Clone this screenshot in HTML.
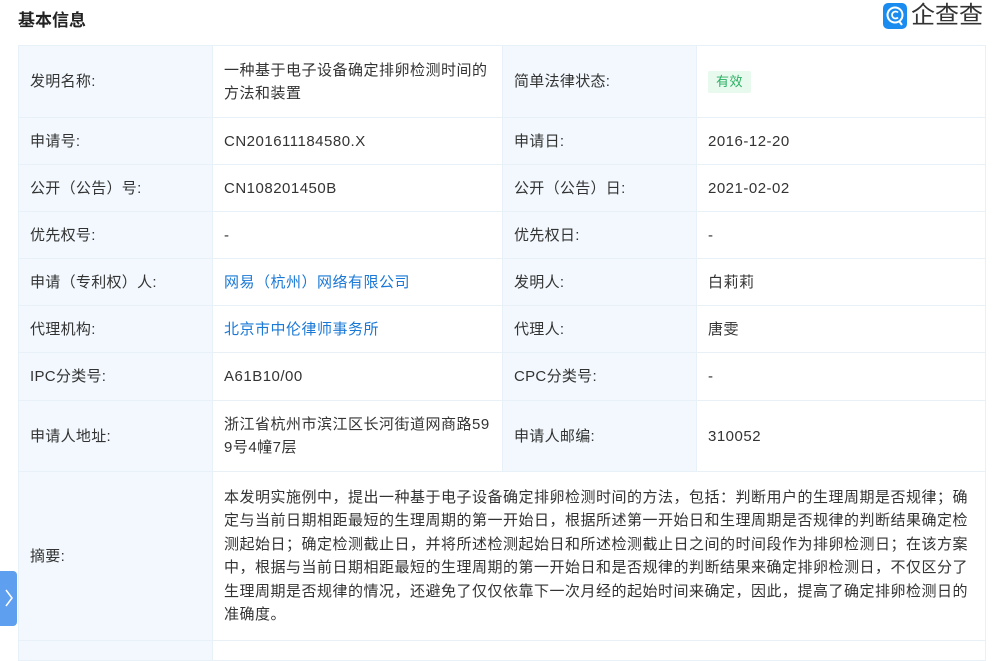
<!DOCTYPE html>
<html><head><meta charset="utf-8"><style>
body{margin:0;width:1000px;height:646px;overflow:hidden;background:#fff;font-family:"Liberation Sans","Noto Sans CJK SC",sans-serif;color:#333;}
.title{position:absolute;left:18px;top:6px;font-size:17px;font-weight:bold;color:#222;}
.logo{position:absolute;left:883px;top:3px;height:26px;display:flex;align-items:center}
.logo .ic{width:24px;height:26px;background:#1a8cf0;border-radius:5px;position:relative}
.logo span{font-size:24px;color:#333;margin-left:4px;letter-spacing:0px;line-height:26px}
table{position:absolute;left:18px;top:45px;border-collapse:collapse;width:967px;font-size:15px;letter-spacing:0.5px;table-layout:fixed}
td{border:1px solid #e9f1f8;padding:0 11px;line-height:23px;vertical-align:middle;word-break:break-all}
td.l{background:#f2f8fd;letter-spacing:0.3px}
a{color:#1a78d6;text-decoration:none}
.tag{display:inline-block;background:#e8f9ee;color:#2ab062;font-size:13px;padding:0 8px;line-height:22px;border-radius:2px}
.side{position:absolute;left:0;top:571px;width:17px;height:55px;background:#5f9ff0;border-radius:0 4px 4px 0}
</style></head><body>
<div class="title">基本信息</div>
<div class="logo"><div class="ic"><svg width="24" height="26" viewBox="0 0 24 26"><circle cx="12" cy="12" r="7.5" fill="none" stroke="#fff" stroke-width="2"/><path d="M15 9.5a3.5 3.5 0 1 0 0 5" fill="none" stroke="#fff" stroke-width="1.8"/><path d="M16 18l3 4" stroke="#fff" stroke-width="2"/></svg></div><span>企查查</span></div>
<table>
<colgroup><col style="width:194px"><col style="width:290px"><col style="width:194px"><col style="width:289px"></colgroup>
<tr style="height:72px"><td class="l">发明名称:</td><td>一种基于电子设备确定排卵检测时间的方法和装置</td><td class="l">简单法律状态:</td><td><span class="tag">有效</span></td></tr>
<tr style="height:47px"><td class="l">申请号:</td><td>CN201611184580.X</td><td class="l">申请日:</td><td>2016-12-20</td></tr>
<tr style="height:47px"><td class="l">公开（公告）号:</td><td>CN108201450B</td><td class="l">公开（公告）日:</td><td>2021-02-02</td></tr>
<tr style="height:47px"><td class="l">优先权号:</td><td>-</td><td class="l">优先权日:</td><td>-</td></tr>
<tr style="height:47px"><td class="l">申请（专利权）人:</td><td><a>网易（杭州）网络有限公司</a></td><td class="l">发明人:</td><td>白莉莉</td></tr>
<tr style="height:47px"><td class="l">代理机构:</td><td><a>北京市中伦律师事务所</a></td><td class="l">代理人:</td><td>唐雯</td></tr>
<tr style="height:48px"><td class="l">IPC分类号:</td><td>A61B10/00</td><td class="l">CPC分类号:</td><td>-</td></tr>
<tr style="height:71px"><td class="l">申请人地址:</td><td>浙江省杭州市滨江区长河街道网商路599号4幢7层</td><td class="l">申请人邮编:</td><td>310052</td></tr>
<tr style="height:169px"><td class="l">摘要:</td><td colspan="3" style="line-height:23.5px">本发明实施例中，提出一种基于电子设备确定排卵检测时间的方法，包括：判断用户的生理周期是否规律；确定与当前日期相距最短的生理周期的第一开始日，根据所述第一开始日和生理周期是否规律的判断结果确定检测起始日；确定检测截止日，并将所述检测起始日和所述检测截止日之间的时间段作为排卵检测日；在该方案中，根据与当前日期相距最短的生理周期的第一开始日和是否规律的判断结果来确定排卵检测日，不仅区分了生理周期是否规律的情况，还避免了仅仅依靠下一次月经的起始时间来确定，因此，提高了确定排卵检测日的准确度。</td></tr>
<tr style="height:20px"><td class="l"></td><td colspan="3"></td></tr>
</table>
<div class="side"><svg width="17" height="55"><path d="M6 19l6 8-6 8" fill="none" stroke="#fff" stroke-width="1.5"/></svg></div>
</body></html>
